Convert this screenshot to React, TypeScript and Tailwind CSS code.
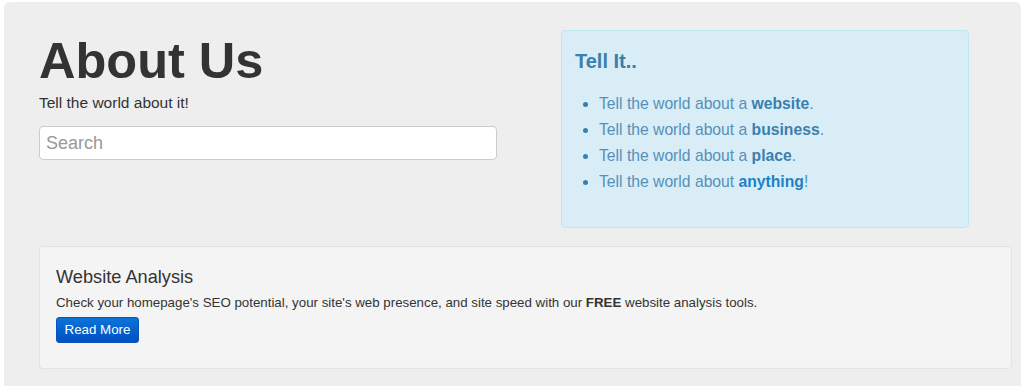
import React from "react";

export default function App() {
  return (
    <div className="bg-white min-h-[386px] pt-[2px] pl-[4px] pr-[3px]" style={{ fontFamily: '"Liberation Sans", Arial, sans-serif' }}>
      <div className="bg-[#eeeeee] rounded-t-[6px] pb-[20px] min-h-[384px]">
        <div className="flex pt-[28px] pl-[35px]">
          <div className="w-[458px] pt-[3px]">
            <h1 className="text-[50.5px] leading-[55px] font-bold text-[#333333]">About Us</h1>
            <p className="mt-[5px] text-[15.5px] leading-[20px] text-[#333333]">Tell the world about it!</p>
            <input
              type="text"
              placeholder="Search"
              className="mt-[13px] w-[458px] h-[34px] bg-white border border-[#cccccc] rounded-[4px] px-[6px] text-[18px] text-[#555] placeholder:text-[#999999] outline-none"
            />
          </div>
          <div className="ml-[64px] w-[408px] bg-[#d9edf7] border border-[#bce8f1] rounded-[4px] pt-[18px] pl-[13px] pb-[32px]">
            <h2 className="text-[20px] leading-[24px] font-bold text-[#3a80ac]">Tell It..</h2>
            <ul className="mt-[18px] list-disc pl-[24px] text-[15.7px] leading-[26px] text-[#5590b9] marker:text-[#3a80ac]">
              <li>Tell the world about a <b className="text-[#3a80ac]">website</b>.</li>
              <li>Tell the world about a <b className="text-[#3a80ac]">business</b>.</li>
              <li>Tell the world about a <b className="text-[#3a80ac]">place</b>.</li>
              <li>Tell the world about <b className="text-[#1a82c8]">anything</b>!</li>
            </ul>
          </div>
        </div>
        <div className="mt-[18px] ml-[35px] mr-[9px] bg-[#f4f4f4] border border-[#e3e3e3] rounded-[4px] pt-[19px] pl-[16px] pb-[25px]">
          <h3 className="text-[18.2px] leading-[22px] text-[#333333]">Website Analysis</h3>
          <p className="mt-[6px] text-[13.3px] leading-[18px] text-[#333333]">
            Check your homepage's SEO potential, your site's web presence, and site speed with our <b>FREE</b> website analysis tools.
          </p>
          <button className="mt-[5px] w-[83px] h-[26px] rounded-[3px] border border-[#0b52b8] bg-gradient-to-b from-[#0c74d8] to-[#0150c2] text-white text-[13.3px] leading-[24px]">
            Read More
          </button>
        </div>
      </div>
    </div>
  );
}
